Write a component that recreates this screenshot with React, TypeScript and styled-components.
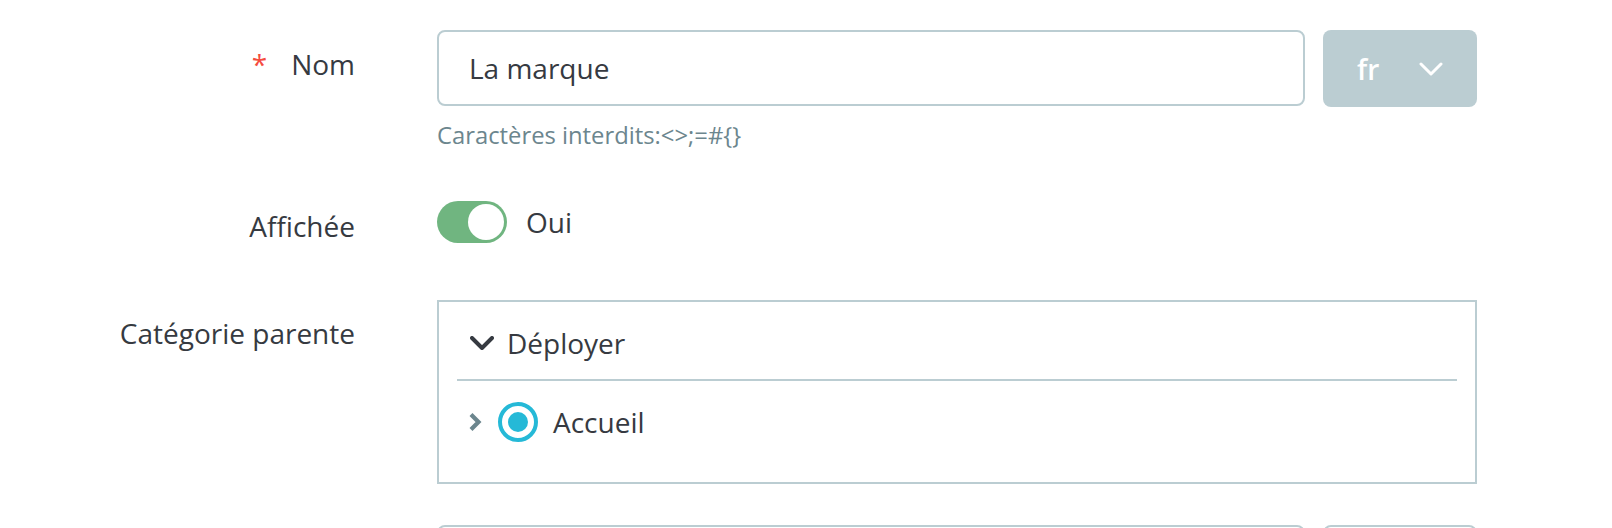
import styled, { createGlobalStyle } from 'styled-components';

const GlobalStyle = createGlobalStyle`
  html, body {
    margin: 0;
    padding: 0;
    background: #ffffff;
  }
  body {
    font-family: "Open Sans", "Noto Sans", sans-serif;
    color: #363a41;
    font-size: 28px;
  }
`;

const Form = styled.div.attrs({ className: 'brand-form' })`
  padding-top: 30px;
  height: 528px;
  overflow: hidden;
  box-sizing: border-box;
`;

const Row = styled.div<{ $gap: number }>`
  display: flex;
  align-items: flex-start;
  margin-bottom: ${(p) => p.$gap}px;
`;

const Label = styled.div<{ $top: number }>`
  width: 355px;
  flex-shrink: 0;
  text-align: right;
  line-height: 42px;
  padding-top: ${(p) => p.$top}px;
  color: #363a41;
`;

const Required = styled.span`
  color: #f54c3e;
  margin-right: 24px;
`;

const Field = styled.div`
  margin-left: 82px;
  width: 1040px;
`;

const InputGroup = styled.div`
  display: flex;
  gap: 18px;
`;

const TextInput = styled.div`
  flex: 1;
  height: 76px;
  box-sizing: border-box;
  border: 2px solid #bbcdd2;
  border-radius: 8px;
  padding: 0 30px;
  display: flex;
  align-items: center;
  color: #363a41;
`;

const LangButton = styled.div<{ $outline?: boolean }>`
  width: 154px;
  height: 77px;
  box-sizing: border-box;
  border-radius: 8px;
  background: ${(p) => (p.$outline ? '#ffffff' : '#bbcdd2')};
  border: ${(p) => (p.$outline ? '2px solid #bbcdd2' : 'none')};
  color: #ffffff;
  font-weight: 600;
  display: flex;
  align-items: center;
  justify-content: space-between;
  padding: 0 34px;
`;

const Help = styled.div`
  margin-top: 12px;
  font-size: 23.8px;
  line-height: 33px;
  color: #6c868e;
`;

const SwitchLine = styled.div`
  display: flex;
  align-items: center;
  gap: 19px;
  height: 42px;
`;

const Switch = styled.div<{ $on: boolean }>`
  width: 70px;
  height: 42px;
  box-sizing: border-box;
  border-radius: 21px;
  background: ${(p) => (p.$on ? '#70b580' : '#bbcdd2')};
  padding: 3px;
  display: flex;
  justify-content: ${(p) => (p.$on ? 'flex-end' : 'flex-start')};
`;

const Knob = styled.div`
  width: 36px;
  height: 36px;
  border-radius: 50%;
  background: #ffffff;
`;

const TreeBox = styled.div`
  height: 184px;
  box-sizing: border-box;
  border: 2px solid #bbcdd2;
  padding: 0 18px;
`;

const TreeHeader = styled.div`
  display: flex;
  align-items: center;
  gap: 13px;
  padding: 20px 0 15px 13px;
  line-height: 42px;
  border-bottom: 2px solid #bbcdd2;
`;

const TreeItem = styled.div`
  display: flex;
  align-items: center;
  padding: 20px 0 0 11px;
  line-height: 42px;
`;

const Radio = styled.div`
  width: 40px;
  height: 40px;
  box-sizing: border-box;
  border-radius: 50%;
  border: 4px solid #25b9d7;
  display: flex;
  align-items: center;
  justify-content: center;
  margin: 0 15px 0 16px;
  &::after {
    content: '';
    width: 20px;
    height: 20px;
    border-radius: 50%;
    background: #25b9d7;
  }
`;

const ChevronDown = ({ color, stroke }: { color: string; stroke: number }) => (
  <svg width="24" height="14" viewBox="0 0 24 14" fill="none">
    <path d="M2 2 L12 12 L22 2" stroke={color} strokeWidth={stroke} strokeLinecap="round" strokeLinejoin="round" />
  </svg>
);

const ChevronRight = () => (
  <svg width="14" height="20" viewBox="0 0 14 20" fill="none">
    <path d="M3 2.5 L10.5 10 L3 17.5" stroke="#6c868e" strokeWidth="4.2" strokeLinejoin="miter" />
  </svg>
);

export default function App() {
  return (
    <>
      <GlobalStyle />
      <Form>
        <Row $gap={49}>
          <Label $top={13}>
            <Required>*</Required>Nom
          </Label>
          <Field>
            <InputGroup>
              <TextInput>La marque</TextInput>
              <LangButton>
                <span>fr</span>
                <ChevronDown color="#ffffff" stroke={3} />
              </LangButton>
            </InputGroup>
            <Help>Caractères interdits:&lt;&gt;;=#{'{}'}</Help>
          </Field>
        </Row>

        <Row $gap={53}>
          <Label $top={4}>Affichée</Label>
          <Field>
            <SwitchLine>
              <Switch $on>
                <Knob />
              </Switch>
              <span>Oui</span>
            </SwitchLine>
          </Field>
        </Row>

        <Row $gap={41}>
          <Label $top={12}>Catégorie parente</Label>
          <Field>
            <TreeBox>
              <TreeHeader>
                <ChevronDown color="#363a41" stroke={4} />
                <span>Déployer</span>
              </TreeHeader>
              <TreeItem>
                <ChevronRight />
                <Radio />
                <span>Accueil</span>
              </TreeItem>
            </TreeBox>
          </Field>
        </Row>

        <Row $gap={0}>
          <Label $top={13} />
          <Field>
            <InputGroup>
              <TextInput />
              <LangButton $outline />
            </InputGroup>
          </Field>
        </Row>
      </Form>
    </>
  );
}
